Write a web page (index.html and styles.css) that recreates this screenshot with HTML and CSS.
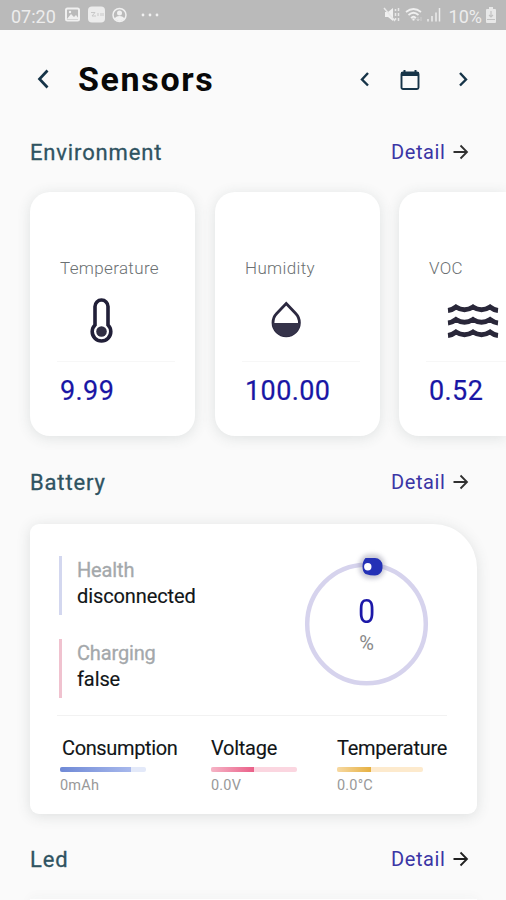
FILE: index.html
```html
<!DOCTYPE html>
<html lang="en">
<head>
<meta charset="utf-8">
<title>Sensors</title>
<link rel="stylesheet" href="styles.css">
</head>
<body>
<div class="status">
  <span class="clock">07:20</span>
  <svg class="status-left" width="96" height="20" viewBox="0 0 96 20">
    <rect x="2" y="3.500" width="13" height="12" rx="1.500" fill="none" stroke="#f0f0f0" stroke-width="2"/>
    <path d="M3 14l4-5 3 3 2-2 3 4z" fill="#f0f0f0"/><circle cx="6" cy="7" r="1.200" fill="#f0f0f0"/>
    <rect x="24" y="1.500" width="17" height="16" rx="4" fill="#ececec"/>
    <path d="M27 7.500h4l-3 3.500h4m2-3v3m3-3v3m2-3v3" fill="none" stroke="#c8c8c8"/>
    <circle cx="55.500" cy="10" r="6.500" fill="none" stroke="#f0f0f0" stroke-width="1.500"/>
    <circle cx="55.500" cy="8" r="2.500" fill="#f0f0f0"/><path d="M50.500 14c1-4 9-4 10 0l-5 2.500z" fill="#f0f0f0"/>
    <g fill="#f0f0f0"><circle cx="79" cy="10" r="1.400"/><circle cx="86" cy="10" r="1.400"/><circle cx="93" cy="10" r="1.400"/></g>
  </svg>
  <svg class="status-right" width="62" height="20" viewBox="0 0 62 20">
    <path d="M3 7h3l5-4v13l-5-4H3z" fill="#f0f0f0"/>
    <path d="M2 3l11 13M13.500 4v2m0 2v3m0 2v2M16.500 3v3m0 2v3m0 2v3" fill="none" stroke="#e8e8e8" stroke-width="1.500"/>
    <path d="M24 7q7.500-6 15 0M26.500 10q5-4.500 10 0M29 13q2.500-2.500 5 0" fill="none" stroke="#f0f0f0" stroke-width="1.700"/>
    <path d="M31.500 16l-2-2.500h4zM36 12v4m-1.500-1.500L36 16l1.500-1.500M39 16v-4" fill="#f0f0f0" stroke="#d4d4d4" stroke-width=".8"/>
    <path d="M46 14v2.500M50 11v5.500M54 7.500v9M57.500 3v13.500" stroke="#ececec" stroke-width="1.500"/>
  </svg>
  <span class="percent">10%</span>
  <svg width="12" height="18" viewBox="0 0 12 18"><path d="M4 1h4v2h2q1 0 1 1v12q0 1-1 1H2q-1 0-1-1V4q0-1 1-1h2z" fill="#e8e8e8"/><path d="M6 5v6M4 9l2 2 2-2M2 13.500h8" fill="none" stroke="#c2c2c2" stroke-width="1.200"/></svg>
</div>
<header class="header">
  <svg class="back" width="16" height="22" viewBox="0 0 16 22"><path d="M13.500 2.500L5.500 11l8 8.500" fill="none" stroke="#163448" stroke-width="2.700"/></svg>
  <h1 class="title">Sensors</h1>
  <nav class="dates">
    <svg width="12" height="18" viewBox="0 0 12 18"><path d="M10 3L4 9.500l6 6" fill="none" stroke="#163448" stroke-width="2.400"/></svg>
    <svg class="calendar" width="20" height="22" viewBox="0 0 20 22"><path d="M4.500 2v3M15.500 2v3" stroke="#163448" stroke-width="2"/><rect x="1.500" y="4.500" width="17" height="16.500" rx="1.500" fill="none" stroke="#163448" stroke-width="1.900"/><path d="M1 4h18v4H1z" fill="#163448"/></svg>
    <svg width="12" height="18" viewBox="0 0 12 18"><path d="M2 3l6 6.500-6 6" fill="none" stroke="#163448" stroke-width="2.400"/></svg>
  </nav>
</header>
<main>
  <section class="environment">
    <div class="section-head">
      <h2 class="name">Environment</h2>
      <a class="detail"><span>Detail</span><svg width="16" height="16" viewBox="0 0 16 16"><path d="M.5 8h13.500M7.500 1.500L14 8l-6.500 6.500" fill="none" stroke="#303030" stroke-width="1.800"/></svg></a>
    </div>
    <div class="cards">
      <article class="card">
        <div class="label">Temperature</div>
        <div class="picture">
          <svg width="82" height="48" viewBox="0 0 82 48"><path d="M35 28V9.500a6.500 6.500 0 0 1 13 0V28a9.300 9.300 0 1 1-13 0z" fill="none" stroke="#211f38" stroke-width="3.600"/><circle cx="41.500" cy="34.500" r="5.300" fill="#302e43"/></svg>
        </div>
        <div class="value">9.99</div>
      </article>
      <article class="card">
        <div class="label">Humidity</div>
        <div class="picture">
          <svg width="82" height="48" viewBox="0 0 82 48"><path d="M41.200 6.500L50.700 16.500a13.200 13.200 0 1 1-19 0z" fill="none" stroke="#2c2940" stroke-width="2.800"/><path d="M27.700 26h27a13 13 0 0 1-27 0z" fill="#35334a"/></svg>
        </div>
        <div class="value">100.00</div>
      </article>
      <article class="card voc">
        <div class="label">VOC</div>
        <div class="picture">
          <svg width="82" height="48" viewBox="0 0 82 48"><g fill="none" stroke="#292739" stroke-width="5"><path d="M19 13.500q4-.4 8-3.500 8.500 5.500 17 0 8.500 5.500 17 0 4 3.100 8 3.500"/><path d="M19 26q4-.4 8-3.500 8.500 5.500 17 0 8.500 5.500 17 0 4 3.100 8 3.500"/><path d="M19 38.500q4-.4 8-3.500 8.500 5.500 17 0 8.500 5.500 17 0 4 3.100 8 3.500"/></g></svg>
        </div>
        <div class="value">0.52</div>
      </article>
    </div>
  </section>
  <section class="battery">
    <div class="section-head">
      <h2 class="name">Battery</h2>
      <a class="detail"><span>Detail</span><svg width="16" height="16" viewBox="0 0 16 16"><path d="M.5 8h13.500M7.500 1.500L14 8l-6.500 6.500" fill="none" stroke="#303030" stroke-width="1.800"/></svg></a>
    </div>
    <article class="battery-card">
      <div class="battery-top">
        <div class="facts">
          <div class="fact"><div class="fact-name">Health</div><div class="fact-value">disconnected</div></div>
          <div class="fact charging"><div class="fact-name">Charging</div><div class="fact-value">false</div></div>
        </div>
        <div class="gauge">
          <svg class="ring" width="136" height="146" viewBox="0 0 136 146">
            <circle cx="67.500" cy="78" r="59.300" fill="none" stroke="#d6d3ed" stroke-width="4.500"/>
            <rect class="knob-shadow" x="60" y="8" width="26" height="25" rx="11" fill="#8e8ea5"/>
            <path d="M66.500 12H76a7.500 7.500 0 0 1 7.500 7.500v2.500a7.500 7.500 0 0 1-7.500 7.500q-5 0-9.500-1.500-3-2-3-7.500t3-8.500z" fill="#2431b6"/>
            <circle cx="68.800" cy="20.700" r="3.700" fill="#fff"/>
          </svg>
          <div class="gauge-text"><div class="zero">0</div><div class="unit">%</div></div>
        </div>
      </div>
      <div class="stats">
        <div class="stat consumption"><div class="stat-name">Consumption</div><div class="bar"><div class="fill"></div></div><div class="amount">0mAh</div></div>
        <div class="stat voltage"><div class="stat-name">Voltage</div><div class="bar"><div class="fill"></div></div><div class="amount">0.0V</div></div>
        <div class="stat temperature"><div class="stat-name">Temperature</div><div class="bar"><div class="fill"></div></div><div class="amount">0.0°C</div></div>
      </div>
    </article>
  </section>
  <section class="led">
    <div class="section-head">
      <h2 class="name">Led</h2>
      <a class="detail"><span>Detail</span><svg width="16" height="16" viewBox="0 0 16 16"><path d="M.5 8h13.500M7.500 1.500L14 8l-6.500 6.500" fill="none" stroke="#202020" stroke-width="1.800"/></svg></a>
    </div>
    <div class="led-card"></div>
  </section>
</main>
</body>
</html>
```
FILE: styles.css
```css
* { box-sizing: border-box; }
body {
  margin: 0;
  width: 506px;
  height: 900px;
  overflow: hidden;
  background: #fafafa;
  font-family: Roboto, sans-serif;
  color: #111517;
}
svg { display: block; flex-shrink: 0; }
.status {
  height: 30px;
  display: flex;
  align-items: center;
  padding: 0 9px 0 11px;
  background: #bababa;
  color: #ededed;
  font-size: 18px;
}
.clock { width: 53px; padding-top: 2px; }
.status-right { margin-left: auto; }
.percent { margin: 2px 3px 0 5px; font-size: 18px; }
.header {
  height: 98px;
  display: flex;
  align-items: center;
  padding: 0 36px 0 34px;
}
.title {
  margin: 0 0 0 28px;
  font-size: 34px;
  line-height: 40px;
  font-weight: 700;
  letter-spacing: 1.65px;
  color: #080808;
}
.dates {
  margin-left: auto;
  display: flex;
  align-items: center;
  width: 112px;
  justify-content: space-between;
}
.calendar { margin-right: 9px; }
.section-head {
  display: flex;
  align-items: center;
  justify-content: space-between;
  height: 48px;
  padding: 0 37px 0 30px;
}
.name {
  margin: 0;
  font-size: 22px;
  font-weight: 400;
  letter-spacing: 0.85px;
  color: #2f5361;
  -webkit-text-stroke: 0.3px #2f5361;
}
.detail {
  display: flex;
  align-items: center;
  color: #3a35a5;
  font-size: 20px;
  letter-spacing: 0.6px;
}
.detail span { width: 62px; }
.cards {
  display: flex;
  gap: 20px;
  width: 506px;
  height: 282px;
  padding: 16px 0 0 30px;
  overflow: hidden;
}
.card {
  flex: 0 0 165px;
  height: 244px;
  padding: 64px 20px 0 30px;
  border-radius: 20px;
  background: #fff;
  box-shadow: 0 2px 14px rgba(60, 75, 75, 0.14);
}
.voc { flex-basis: 107px; margin-left: -1px; padding-right: 0; border-radius: 20px 0 0 20px; }
.voc .picture { width: 80px; }
.label {
  height: 24px;
  font-size: 17px;
  line-height: 24px;
  font-weight: 300;
  letter-spacing: 0.35px;
  color: #6b7072;
}
.picture {
  width: 118px;
  height: 82px;
  margin-left: -3px;
  padding-top: 17px;
  border-bottom: 1px solid #f7f7f7;
}
.picture svg { margin-left: 3px; }
.value {
  margin-top: 13px;
  font-size: 27px;
  line-height: 32px;
  letter-spacing: 0.4px;
  color: #1916a5;
  -webkit-text-stroke: 0.2px #1916a5;
  white-space: nowrap;
}
.battery-card {
  width: 447px;
  height: 290px;
  margin: 18px 0 0 30px;
  border-radius: 9px 44px 9px 9px;
  background: #fff;
  box-shadow: 0 2px 14px rgba(60, 75, 75, 0.15);
}
.battery-top {
  height: 192px;
  margin: 0 30px 0 27px;
  display: flex;
  justify-content: space-between;
  border-bottom: 1px solid #f2f2f2;
}
.facts {
  padding: 32px 0 0 2px;
  display: flex;
  flex-direction: column;
  gap: 24px;
}
.fact {
  height: 59px;
  padding: 1px 0 0 15px;
  border-left: 3px solid #d3d7ef;
  font-size: 20px;
  line-height: 26px;
}
.charging { border-color: #f0c2cf; }
.fact-name { color: #a4a8ab; letter-spacing: -0.15px; -webkit-text-stroke: 0.3px #a4a8ab; }
.fact-value { letter-spacing: -0.1px; -webkit-text-stroke: 0.15px #111517; }
.gauge { position: relative; width: 136px; margin: 22px 12px 0 0; }
.knob-shadow { filter: blur(2px); opacity: 0.45; }
.gauge-text {
  position: absolute;
  top: 47px;
  width: 135px;
  text-align: center;
}
.zero { font-size: 34px; line-height: 36px; color: #1c18a8; transform: scaleX(0.9); }
.unit { margin-top: 2px; font-size: 20px; line-height: 24px; color: #888; }
.stats { display: flex; padding: 19px 0 0 30px; }
.stat { width: 151px; flex-shrink: 0; }
.voltage { width: 126px; }
.temperature { width: 110px; }
.stat-name {
  font-size: 20px;
  line-height: 26px;
  height: 32px;
  white-space: nowrap;
  letter-spacing: -0.37px;
  -webkit-text-stroke: 0.12px #111517;
}
.consumption .stat-name { padding-left: 2px; }
.voltage .stat-name, .temperature .stat-name { letter-spacing: -0.25px; }
.bar { width: 86px; height: 5px; border-radius: 2px; overflow: hidden; }
.fill { height: 100%; }
.consumption .bar { background: #e3e9f9; }
.consumption .fill { width: 71px; background: linear-gradient(90deg, #6f89d6, #a7b8ec); }
.voltage .bar { background: #fbd6e0; }
.voltage .fill { width: 43px; background: linear-gradient(90deg, #f6b4c6, #ea5f88); }
.temperature .bar { background: #fdeacd; }
.temperature .fill { width: 34px; background: linear-gradient(90deg, #f7d9a2, #e6b041); }
.amount {
  margin-top: 5px;
  font-size: 14.5px;
  line-height: 18px;
  letter-spacing: 0.2px;
  color: #999;
}
.led { margin-top: 21px; }
.led-card {
  width: 447px;
  height: 1px;
  margin: 16px 0 0 30px;
  background: #fff;
  box-shadow: 0 2px 12px rgba(60, 75, 75, 0.3);
}
```
